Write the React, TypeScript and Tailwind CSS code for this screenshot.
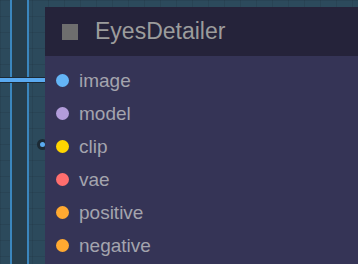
const INPUTS = [
  { name: 'image', color: '#64b5f6' },
  { name: 'model', color: '#b39ddb' },
  { name: 'clip', color: '#ffd500' },
  { name: 'vae', color: '#ff6e6e' },
  { name: 'positive', color: '#ffa931' },
  { name: 'negative', color: '#ffa931' },
];

export default function App() {
  return (
    <div
      className="relative w-[358px] h-[264px] overflow-hidden bg-[#2c4a5c]"
      style={{
        backgroundImage:
          'linear-gradient(to right, rgba(0,0,0,0.08) 1px, transparent 1px), linear-gradient(to bottom, rgba(0,0,0,0.08) 1px, transparent 1px)',
        backgroundSize: '16px 16px',
      }}
    >
      {/* group band + wires on canvas */}
      <div className="absolute left-[10px] top-0 h-full w-[19px] bg-[#263d4b] border-x-2 border-[#3b86bd]" />
      <div className="absolute left-0 top-[77px] w-[46px] h-[6px] bg-[#1c2a35]">
        <div className="mt-[1px] h-[4px] bg-[#5aaaf0]" />
      </div>
      <div className="absolute left-[37px] top-[139px] w-[11px] h-[11px] rounded-full bg-[#1c2a35] flex items-center justify-center">
        <div className="w-[5px] h-[5px] rounded-full bg-[#5aaaf0]" />
      </div>

      {/* node */}
      <div className="absolute left-[45px] top-[7px] w-[340px] h-[280px] flex flex-col font-['Liberation_Sans',Arial,sans-serif]">
        <div className="h-[49px] shrink-0 bg-[#25233a] flex items-center pl-[17px] gap-[17px]">
          <div className="w-[16px] h-[16px] bg-[#6e6e6e]" />
          <span className="text-[23px] text-[#9c9c9c] leading-none">EyesDetailer</span>
        </div>
        <div className="flex-1 bg-[#353456] flex flex-col pt-[8px]">
          {INPUTS.map(i => (
            <div key={i.name} className="h-[33px] flex items-center pl-[11px] gap-[10px]">
              <div className="w-[13px] h-[13px] rounded-full" style={{ background: i.color }} />
              <span className="text-[19px] text-[#a4a4ae] leading-none">{i.name}</span>
            </div>
          ))}
        </div>
      </div>
    </div>
  );
}
